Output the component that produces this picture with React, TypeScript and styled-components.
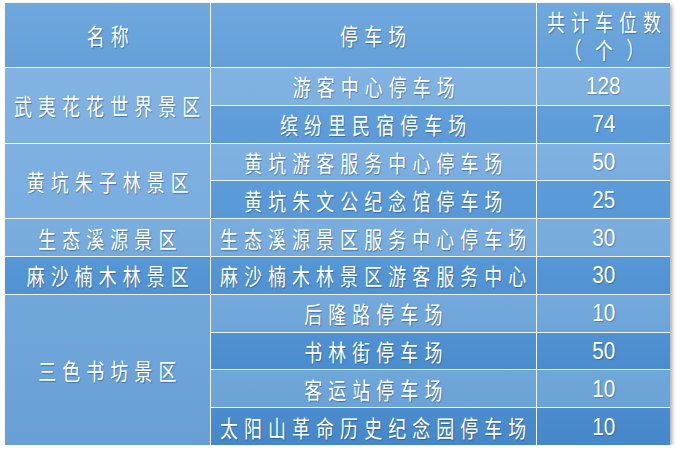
import React from "react";
import styled, { createGlobalStyle } from "styled-components";

const Global = createGlobalStyle`
  html, body { margin: 0; padding: 0; background: #ffffff; }
  body { font-family: "Noto Sans CJK SC", "Noto Sans", sans-serif; }
`;

const Page = styled.div`
  padding: 3px 0 0 5px;
`;

const Table = styled.div`
  display: grid;
  grid-template-columns: 205px 325px 133px;
  grid-template-rows: 64px repeat(10, 1fr);
  gap: 1px;
  width: 665px;
  height: 442px;
  background: #eef4fb;
  box-shadow: 2px 2px 4px rgba(0, 0, 0, 0.35);
`;

const Cell = styled.div<{ $top: string; $bottom: string; $span?: number }>`
  grid-row: span ${(p) => p.$span ?? 1};
  display: flex;
  flex-direction: column;
  align-items: center;
  justify-content: center;
  background: linear-gradient(180deg, ${(p) => p.$top}, ${(p) => p.$bottom});
  color: #ffffff;
  overflow: visible;
`;

const Label = styled.span`
  display: inline-block;
  white-space: pre;
  text-align: center;
  font-family: "Noto Sans CJK SC", "Noto Sans", sans-serif;
  font-size: 23px;
  line-height: 28px;
  letter-spacing: 7.8px;
  padding-left: 7.8px;
  transform: scaleX(0.78);
  text-shadow: 1px 1px 1px rgba(10, 50, 100, 0.45);
`;

const Num = styled.span`
  display: inline-block;
  white-space: nowrap;
  font-family: "Liberation Sans", Arial, sans-serif;
  font-size: 23px;
  line-height: 28px;
  transform: scaleX(0.9);
  text-shadow: 1px 1px 1px rgba(10, 50, 100, 0.35);
`;

type Row = { park: string; count: string; c: [string, string] };

const rows: Row[] = [
  { park: "游客中心停车场", count: "128", c: ["#82b3e2", "#7eb0e0"] },
  { park: "缤纷里民宿停车场", count: "74", c: ["#609fdb", "#5c9bd8"] },
  { park: "黄坑游客服务中心停车场", count: "50", c: ["#7fb1e1", "#7aaddf"] },
  { park: "黄坑朱文公纪念馆停车场", count: "25", c: ["#5c9cd9", "#5798d6"] },
  { park: "生态溪源景区服务中心停车场", count: "30", c: ["#7aaede", "#75aadc"] },
  { park: "麻沙楠木林景区游客服务中心", count: "30", c: ["#5698d6", "#5092d2"] },
  { park: "后隆路停车场", count: "10", c: ["#73a9dc", "#6ea5d9"] },
  { park: "书林街停车场", count: "50", c: ["#4f91d1", "#4a8dce"] },
  { park: "客运站停车场", count: "10", c: ["#70a7da", "#6ba3d7"] },
  { park: "太阳山革命历史纪念园停车场", count: "10", c: ["#4b8ccd", "#4587c9"] },
];

const areas: { name: string; span: number; c: [string, string] }[] = [
  { name: "武夷花花世界景区", span: 2, c: ["#82b3e2", "#7eb0e0"] },
  { name: "黄坑朱子林景区", span: 2, c: ["#7fb1e1", "#79ade0"] },
  { name: "生态溪源景区", span: 1, c: ["#7aaede", "#75aadc"] },
  { name: "麻沙楠木林景区", span: 1, c: ["#5698d6", "#5092d2"] },
  { name: "三色书坊景区", span: 4, c: ["#70a8dc", "#68a0d6"] },
];

const HEAD: [string, string] = ["#6fa8dd", "#639fd8"];

export default function App() {
  const startRow: number[] = [];
  let r = 0;
  areas.forEach((a) => {
    startRow.push(r);
    r += a.span;
  });

  const cells: React.ReactNode[] = [
    <Cell key="h1" $top={HEAD[0]} $bottom={HEAD[1]}>
      <Label>名称</Label>
    </Cell>,
    <Cell key="h2" $top={HEAD[0]} $bottom={HEAD[1]}>
      <Label>停车场</Label>
    </Cell>,
    <Cell key="h3" $top={HEAD[0]} $bottom={HEAD[1]}>
      <Label>{"共计车位数\n（\u200A个\u200A）"}</Label>
    </Cell>,
  ];

  rows.forEach((row, i) => {
    const ai = startRow.indexOf(i);
    if (ai >= 0) {
      const a = areas[ai];
      cells.push(
        <Cell key={`a${i}`} $top={a.c[0]} $bottom={a.c[1]} $span={a.span}>
          <Label>{a.name}</Label>
        </Cell>
      );
    }
    cells.push(
      <Cell key={`p${i}`} $top={row.c[0]} $bottom={row.c[1]}>
        <Label>{row.park}</Label>
      </Cell>,
      <Cell key={`c${i}`} $top={row.c[0]} $bottom={row.c[1]}>
        <Num>{row.count}</Num>
      </Cell>
    );
  });

  return (
    <>
      <Global />
      <Page>
        <Table>{cells}</Table>
      </Page>
    </>
  );
}
